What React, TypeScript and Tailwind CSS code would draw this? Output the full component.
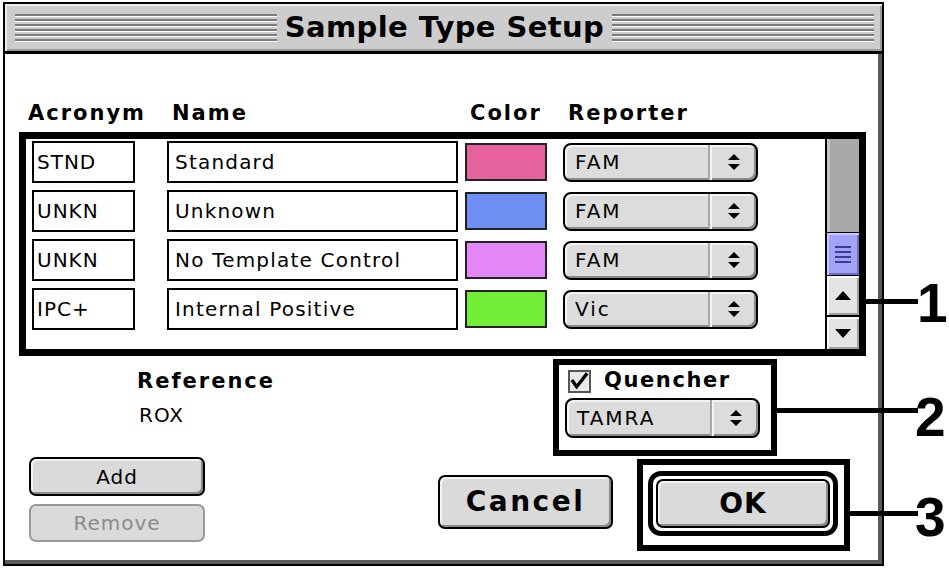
import React from "react";

const rows = [
  { a: "STND", n: "Standard", c: "bg-[#e6629c]", r: "FAM" },
  { a: "UNKN", n: "Unknown", c: "bg-[#6f8ff4]", r: "FAM" },
  { a: "UNKN", n: "No Template Control", c: "bg-[#e388f6]", r: "FAM" },
  { a: "IPC+", n: "Internal Positive", c: "bg-[#73ee36]", r: "Vic" },
];

const Lines = () => (
  <div className="flex flex-1 flex-col gap-[2px]">
    {[0, 1, 2, 3, 4, 5].map((i) => (
      <div key={i} className="h-[3px] border-b border-white bg-[#7b7b7b]" />
    ))}
  </div>
);

const Arrows = () => (
  <svg width="14" height="18" viewBox="0 0 14 18">
    <path d="M7 1 L13 7 L1 7 Z" fill="#000" />
    <path d="M1 11 L13 11 L7 17 Z" fill="#000" />
  </svg>
);

const Popup = ({ label, h }: { label: string; h: string }) => (
  <div
    className={`flex ${h} w-[195px] items-stretch rounded-[8px] border-2 border-black bg-[#dcdcdc] shadow-[inset_-2px_-2px_0_#8a8a8a,inset_2px_2px_0_#f4f4f4]`}
  >
    <span className="flex flex-1 items-center pl-[10px] text-[20px] tracking-[2px] text-black">
      {label}
    </span>
    <div className="flex w-[46px] items-center justify-center border-l-2 border-l-[#f4f4f4] shadow-[-2px_0_0_#a8a8a8]">
      <Arrows />
    </div>
  </div>
);

const MacButton = ({
  children,
  cls,
}: {
  children: React.ReactNode;
  cls: string;
}) => (
  <div
    className={`flex items-center justify-center rounded-[7px] border-2 bg-[#dadada] shadow-[inset_-2px_-2px_0_#8a8a8a,inset_2px_2px_0_#f2f2f2] ${cls}`}
  >
    {children}
  </div>
);

export default function App() {
  return (
    <div className="relative h-[570px] w-[949px] overflow-hidden bg-white font-['DejaVu_Sans',sans-serif] text-black">
      {/* window */}
      <div className="ml-[3px] mt-[2px] flex h-[564px] w-[881px] flex-col border-2 border-black">
        {/* title bar */}
        <div className="flex h-[50px] items-center gap-[8px] border-b-[3px] border-black bg-[#cdcdcd] pl-[10px] pr-[8px] shadow-[inset_2px_2px_0_#ececec,inset_-2px_-2px_0_#9a9a9a]">
          <Lines />
          <span className="text-[29px] font-bold leading-none tracking-[0.4px]">
            Sample Type Setup
          </span>
          <Lines />
        </div>

        {/* body */}
        <div className="flex flex-1 flex-col shadow-[inset_-4px_-4px_0_#5a5a5a]">
          {/* header */}
          <div className="ml-[23px] mt-[47px] flex h-[24px] items-center text-[21px] font-bold leading-[24px] tracking-[2px]">
            <span className="w-[144px]">Acronym</span>
            <span className="w-[298px]">Name</span>
            <span className="w-[98px]">Color</span>
            <span>Reporter</span>
          </div>

          {/* table box */}
          <div className="ml-[14px] mt-[7px] flex h-[224px] w-[847px] border-[7px] border-black">
            <div className="flex flex-1 flex-col gap-[7px] pl-[6px] pt-[2px]">
              {rows.map((row, i) => (
                <div key={i} className="flex h-[42px] items-center">
                  <div className="flex h-full w-[103px] items-center border-2 border-black px-[3px] text-[20px] tracking-[1px]">
                    {row.a}
                  </div>
                  <div className="ml-[32px] flex h-full w-[291px] items-center border-2 border-black px-[6px] text-[20px] tracking-[1.2px]">
                    {row.n}
                  </div>
                  <div
                    className={`ml-[7px] h-[38px] w-[82px] border-2 border-[#222] ${row.c}`}
                  />
                  <div className="ml-[16px]">
                    <Popup label={row.r} h="h-[39px]" />
                  </div>
                </div>
              ))}
            </div>
            {/* scrollbar */}
            <div className="flex w-[34px] flex-col border-l-2 border-black">
              <div className="h-[93px] bg-[#a9a9a9] shadow-[inset_3px_0_0_#c4c4c4]" />
              <div className="flex h-[44px] flex-col items-center justify-center gap-[3px] border-y border-black bg-[#a3a3f6] shadow-[inset_2px_2px_0_#c8c8ff,inset_-2px_-2px_0_#6f6fc8]">
                {[0, 1, 2, 3].map((i) => (
                  <div key={i} className="h-[2px] w-[16px] bg-[#3a3a9a]" />
                ))}
              </div>
              <div className="flex h-[39px] items-center justify-center bg-[#e4e4e4] shadow-[inset_2px_2px_0_#fafafa,inset_-2px_-2px_0_#a0a0a0]">
                <svg width="16" height="9" viewBox="0 0 16 9">
                  <path d="M8 0 L16 9 L0 9 Z" fill="#000" />
                </svg>
              </div>
              <div className="flex flex-1 items-center justify-center border-t-2 border-black bg-[#e4e4e4] shadow-[inset_2px_2px_0_#fafafa,inset_-2px_-2px_0_#a0a0a0]">
                <svg width="16" height="9" viewBox="0 0 16 9">
                  <path d="M0 0 L16 0 L8 9 Z" fill="#000" />
                </svg>
              </div>
            </div>
          </div>

          {/* bottom region */}
          <div className="flex">
            <div className="ml-[24px] flex w-[409px] flex-col">
              <div className="ml-[108px] mt-[13px] h-[24px] text-[21px] font-bold leading-[24px] tracking-[2px]">
                Reference
              </div>
              <div className="ml-[110px] mt-[10px] h-[24px] text-[20px] leading-[24px] tracking-[1px]">
                ROX
              </div>
              <MacButton cls="mt-[30px] h-[39px] w-[176px] border-black text-[20px] tracking-[1px]">
                Add
              </MacButton>
              <MacButton cls="mt-[8px] h-[38px] w-[176px] border-[#9a9a9a] text-[20px] tracking-[1px] text-[#8a8a8a] shadow-none">
                Remove
              </MacButton>
            </div>

            <div className="flex flex-col">
              {/* quencher callout box */}
              <div className="ml-[115px] mt-[3px] flex h-[97px] w-[224px] flex-col border-[6px] border-black pl-[6px] pt-[4px]">
                <div className="flex h-[24px] items-center">
                  <div className="ml-[3px] flex h-[23px] w-[23px] items-center justify-center border-2 border-[#555] bg-[#e8e8e8]">
                    <svg width="20" height="18" viewBox="0 0 20 18">
                      <path
                        d="M2 8 L7 15 L18 1"
                        fill="none"
                        stroke="#000"
                        strokeWidth="3.5"
                      />
                    </svg>
                  </div>
                  <span className="ml-[13px] text-[21px] font-bold tracking-[1.6px]">
                    Quencher
                  </span>
                </div>
                <div className="mt-[5px]">
                  <Popup label="TAMRA" h="h-[40px]" />
                </div>
              </div>

              <div className="mt-[3px] flex items-start">
                <MacButton cls="mt-[16px] h-[54px] w-[175px] border-black text-[28px] font-bold tracking-[2.5px]">
                  Cancel
                </MacButton>
                {/* OK callout box */}
                <div className="ml-[24px] h-[92px] w-[213px] border-[6px] border-black pl-[5px] pt-[6px]">
                  <div className="h-[65px] w-[190px] rounded-[13px] border-[5px] border-black p-[3px]">
                    <MacButton cls="h-full w-full border-black text-[28px] font-bold tracking-[1px]">
                      OK
                    </MacButton>
                  </div>
                </div>
              </div>
            </div>
          </div>
        </div>
      </div>

      {/* callout leaders and numbers */}
      <div className="absolute left-[866px] top-[299px] h-[5px] w-[52px] bg-black" />
      <div className="absolute left-[777px] top-[408px] h-[5px] w-[141px] bg-black" />
      <div className="absolute left-[850px] top-[511px] h-[5px] w-[68px] bg-black" />
      <div className="absolute left-[917px] top-[276px] font-['Liberation_Sans',sans-serif] text-[55px] font-bold leading-[55px]">
        1
      </div>
      <div className="absolute left-[915px] top-[390px] font-['Liberation_Sans',sans-serif] text-[55px] font-bold leading-[55px]">
        2
      </div>
      <div className="absolute left-[915px] top-[490px] font-['Liberation_Sans',sans-serif] text-[55px] font-bold leading-[55px]">
        3
      </div>
    </div>
  );
}
